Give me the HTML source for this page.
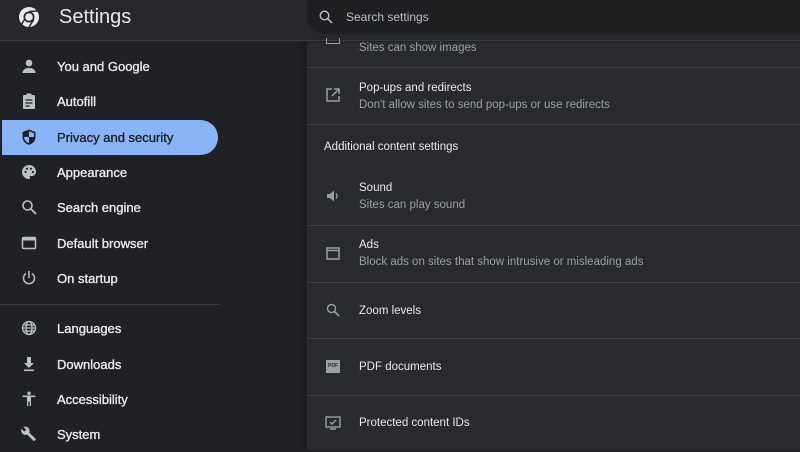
<!DOCTYPE html>
<html><head><style>
*{margin:0;padding:0;box-sizing:border-box}
body{width:800px;height:450px;overflow:hidden;background:#202124;font-family:"Liberation Sans",sans-serif;position:relative;color:#e8eaed}
.hdr{position:absolute;left:0;top:0;width:800px;height:41px;background:#27282b;border-bottom:1px solid #3c3d40}
.title{position:absolute;left:59px;top:6px;font-size:20px;color:#e8eaed}
.search{position:absolute;left:307px;top:0;width:493px;height:34px;background:#1e1f21;border-radius:0 0 0 17px}
.search span{position:absolute;left:39px;top:10px;font-size:12px;color:#bdc1c6}
.side{position:absolute;left:0;top:42px;width:300px;height:408px;background:#202124}
.it{position:absolute;left:0;height:35px;width:218px;font-size:13px;color:#e8eaed;-webkit-text-stroke:0.35px #e8eaed}
.it span{position:absolute;left:57px;top:10px}
.it svg{position:absolute;left:21px;top:9px}
.act{background:#8ab4f8;color:#202124;-webkit-text-stroke:0.35px #202124;border-radius:0 18px 18px 0;left:2px;width:216px}
.act span{left:55px}.act svg{left:19px}
.panel{position:absolute;left:307px;top:42px;width:493px;height:408px;background:#292a2d}
.row{position:absolute;left:307px;width:493px;border-top:1px solid #3c3d40}
.t{position:absolute;left:359px;font-size:11.5px;color:#e8eaed}
.s{position:absolute;left:359px;font-size:11.5px;color:#9aa0a6}
.ic{position:absolute;left:325px}
</style></head><body>
<div class="hdr">
<svg style="position:absolute;left:18px;top:6px" width="22" height="22" viewBox="0 0 22 22"><circle cx="11" cy="11" r="10" fill="#e8eaed"/><circle cx="11" cy="11" r="5.5" fill="#27282b"/><circle cx="11" cy="11" r="3.8" fill="#e8eaed"/><path d="M11 5.5L20 5" stroke="#27282b" stroke-width="1.5"/><path d="M6.3 13.7L2 21" stroke="#27282b" stroke-width="1.5"/><path d="M15.7 13.7L11 21" stroke="#27282b" stroke-width="1.5"/></svg>
<div class="title">Settings</div>
</div>
<div class="search"><svg style="position:absolute;left:12px;top:10px" width="14" height="14" viewBox="0 0 14 14"><circle cx="5.5" cy="5.5" r="4.3" stroke="#bdc1c6" stroke-width="1.4" fill="none"/><path d="M8.7 8.7L13 13" stroke="#bdc1c6" stroke-width="1.5"/></svg><span>Search settings</span></div>
<div class="side"></div>
<div class="it" style="top:49px"><svg width="16" height="16" viewBox="0 0 16 16" fill="#bdc1c6"><circle cx="8" cy="5" r="3.3"/><path d="M1.5 15c0-3.5 3-5 6.5-5s6.5 1.5 6.5 5z"/></svg><span>You and Google</span></div>
<div class="it" style="top:84px"><svg width="16" height="16" viewBox="0 0 16 16"><rect x="2" y="2" width="12" height="14" rx="1" fill="#bdc1c6"/><rect x="5.5" y="0.5" width="5" height="3" fill="#bdc1c6"/><path d="M4.5 7h7M4.5 10h7M4.5 13h4" stroke="#202124" stroke-width="1.2"/></svg><span>Autofill</span></div>
<div class="it act" style="top:120px"><svg width="16" height="16" viewBox="0 0 16 16"><path d="M8 0.5L14.5 3v5c0 4-3 6.8-6.5 7.8C4.5 14.8 1.5 12 1.5 8V3z" fill="#202124"/><path d="M8 2.2L13 4.2V8H8zM8 8H3c.3 3 2.3 5.3 5 6.1z" fill="#8ab4f8"/></svg><span>Privacy and security</span></div>
<div class="it" style="top:155px"><svg width="16" height="16" viewBox="0 0 16 16"><path d="M8 1a7 7 0 0 0 0 14c1 0 1.3-.8.8-1.5-.5-.7 0-1.5.8-1.5H11a4 4 0 0 0 4-4C15 4 12 1 8 1z" fill="#bdc1c6"/><circle cx="4.5" cy="8" r="1.1" fill="#202124"/><circle cx="6" cy="4.7" r="1.1" fill="#202124"/><circle cx="10" cy="4.7" r="1.1" fill="#202124"/><circle cx="12" cy="8" r="1.1" fill="#202124"/></svg><span>Appearance</span></div>
<div class="it" style="top:190px"><svg width="16" height="16" viewBox="0 0 16 16"><circle cx="6.5" cy="6.5" r="4.5" stroke="#bdc1c6" stroke-width="1.6" fill="none"/><path d="M10 10l5 5" stroke="#bdc1c6" stroke-width="1.8"/></svg><span>Search engine</span></div>
<div class="it" style="top:226px"><svg width="16" height="16" viewBox="0 0 16 16"><rect x="1.5" y="2.5" width="13" height="11" rx="1" stroke="#bdc1c6" stroke-width="1.5" fill="none"/><rect x="1.5" y="2.5" width="13" height="3" fill="#bdc1c6"/></svg><span>Default browser</span></div>
<div class="it" style="top:261px"><svg width="16" height="16" viewBox="0 0 16 16"><path d="M5 3.5a5.5 5.5 0 1 0 6 0" stroke="#bdc1c6" stroke-width="1.5" fill="none"/><path d="M8 1v7" stroke="#bdc1c6" stroke-width="1.5"/></svg><span>On startup</span></div>
<div style="position:absolute;left:0;top:304px;width:220px;height:1px;background:#3c3d40"></div>
<div class="it" style="top:311px"><svg width="16" height="16" viewBox="0 0 16 16" fill="none" stroke="#bdc1c6" stroke-width="1.3"><circle cx="8" cy="8" r="6.5"/><ellipse cx="8" cy="8" rx="3" ry="6.5"/><path d="M1.5 8h13M2.5 5h11M2.5 11h11"/></svg><span>Languages</span></div>
<div class="it" style="top:347px"><svg width="16" height="16" viewBox="0 0 16 16" fill="#bdc1c6"><path d="M6 1h4v6h3l-5 5-5-5h3z"/><rect x="3" y="13.5" width="10" height="1.6"/></svg><span>Downloads</span></div>
<div class="it" style="top:382px"><svg width="16" height="16" viewBox="0 0 16 16" fill="#bdc1c6"><circle cx="8" cy="2.2" r="1.7"/><path d="M1.5 4.5h13v1.6H10V15H8.7v-4.5H7.3V15H6V6.1H1.5z"/></svg><span>Accessibility</span></div>
<div class="it" style="top:417px"><svg width="16" height="16" viewBox="0 0 16 16" fill="#bdc1c6"><path d="M14.5 12.8L8.3 6.6c.6-1.6.3-3.4-1-4.7C6 .6 4 .3 2.5 1l2.7 2.7-1.8 1.8L.6 2.8C-.1 4.3.2 6.3 1.5 7.6c1.3 1.3 3.1 1.6 4.7 1L12.4 14.8c.3.3.7.3 1 0l1.1-1c.3-.3.3-.8 0-1z"/></svg><span>System</span></div>

<div class="panel"></div>
<div style="position:absolute;left:300px;top:42px;width:7px;height:408px;background:#1d1e20"></div>
<div class="ic" style="top:38px;width:14px;height:6px;border:1.5px solid #9aa0a6;border-top:none;left:326px"></div>
<div class="s" style="top:42px">Sites can show images</div>
<div class="row" style="top:67px"></div>
<svg class="ic" style="top:88px;left:326px" width="14" height="14" viewBox="0 0 14 14" fill="none" stroke="#9aa0a6" stroke-width="1.5"><path d="M6 1H1v12h12V8"/><path d="M8 1h5v5M13 1L6 8"/></svg>
<div class="t" style="top:82px">Pop-ups and redirects</div>
<div class="s" style="top:99px">Don't allow sites to send pop-ups or use redirects</div>
<div class="row" style="top:124px"></div>
<div class="t" style="top:141px;left:324px">Additional content settings</div>
<svg class="ic" style="top:189px;left:326px" width="14" height="14" viewBox="0 0 14 14" fill="#9aa0a6"><path d="M1 5h3l4-3.5v11L4 9H1z"/><path d="M10 4.5a3.5 3.5 0 0 1 0 5" stroke="#9aa0a6" stroke-width="1.3" fill="none"/></svg>
<div class="t" style="top:182px">Sound</div>
<div class="s" style="top:199px">Sites can play sound</div>
<div class="row" style="top:225px"></div>
<svg class="ic" style="top:247px;left:326px" width="14" height="13" viewBox="0 0 14 13" fill="none" stroke="#9aa0a6" stroke-width="1.5"><rect x="1" y="1" width="12" height="11"/><path d="M1 3.5h12"/></svg>
<div class="t" style="top:239px">Ads</div>
<div class="s" style="top:256px">Block ads on sites that show intrusive or misleading ads</div>
<div class="row" style="top:282px"></div>
<svg class="ic" style="top:303px;left:326px" width="14" height="14" viewBox="0 0 14 14"><circle cx="5.5" cy="5.5" r="4" stroke="#9aa0a6" stroke-width="1.4" fill="none"/><path d="M8.5 8.5L13 13" stroke="#9aa0a6" stroke-width="1.6"/></svg>
<div class="t" style="top:305px">Zoom levels</div>
<div class="row" style="top:338px"></div>
<div class="ic" style="top:360px;left:326px;width:14px;height:13px;background:#9aa0a6;font-size:5px;font-weight:bold;color:#292a2d;text-align:center;line-height:13px">PDF</div>
<div class="t" style="top:361px">PDF documents</div>
<div class="row" style="top:395px"></div>
<svg class="ic" style="top:416px;left:325px" width="16" height="14" viewBox="0 0 16 14" fill="none" stroke="#9aa0a6" stroke-width="1.4"><rect x="1" y="1" width="14" height="10"/><path d="M5 13h6M5 6l2 2 4-4"/></svg>
<div class="t" style="top:417px">Protected content IDs</div>
</body></html>
